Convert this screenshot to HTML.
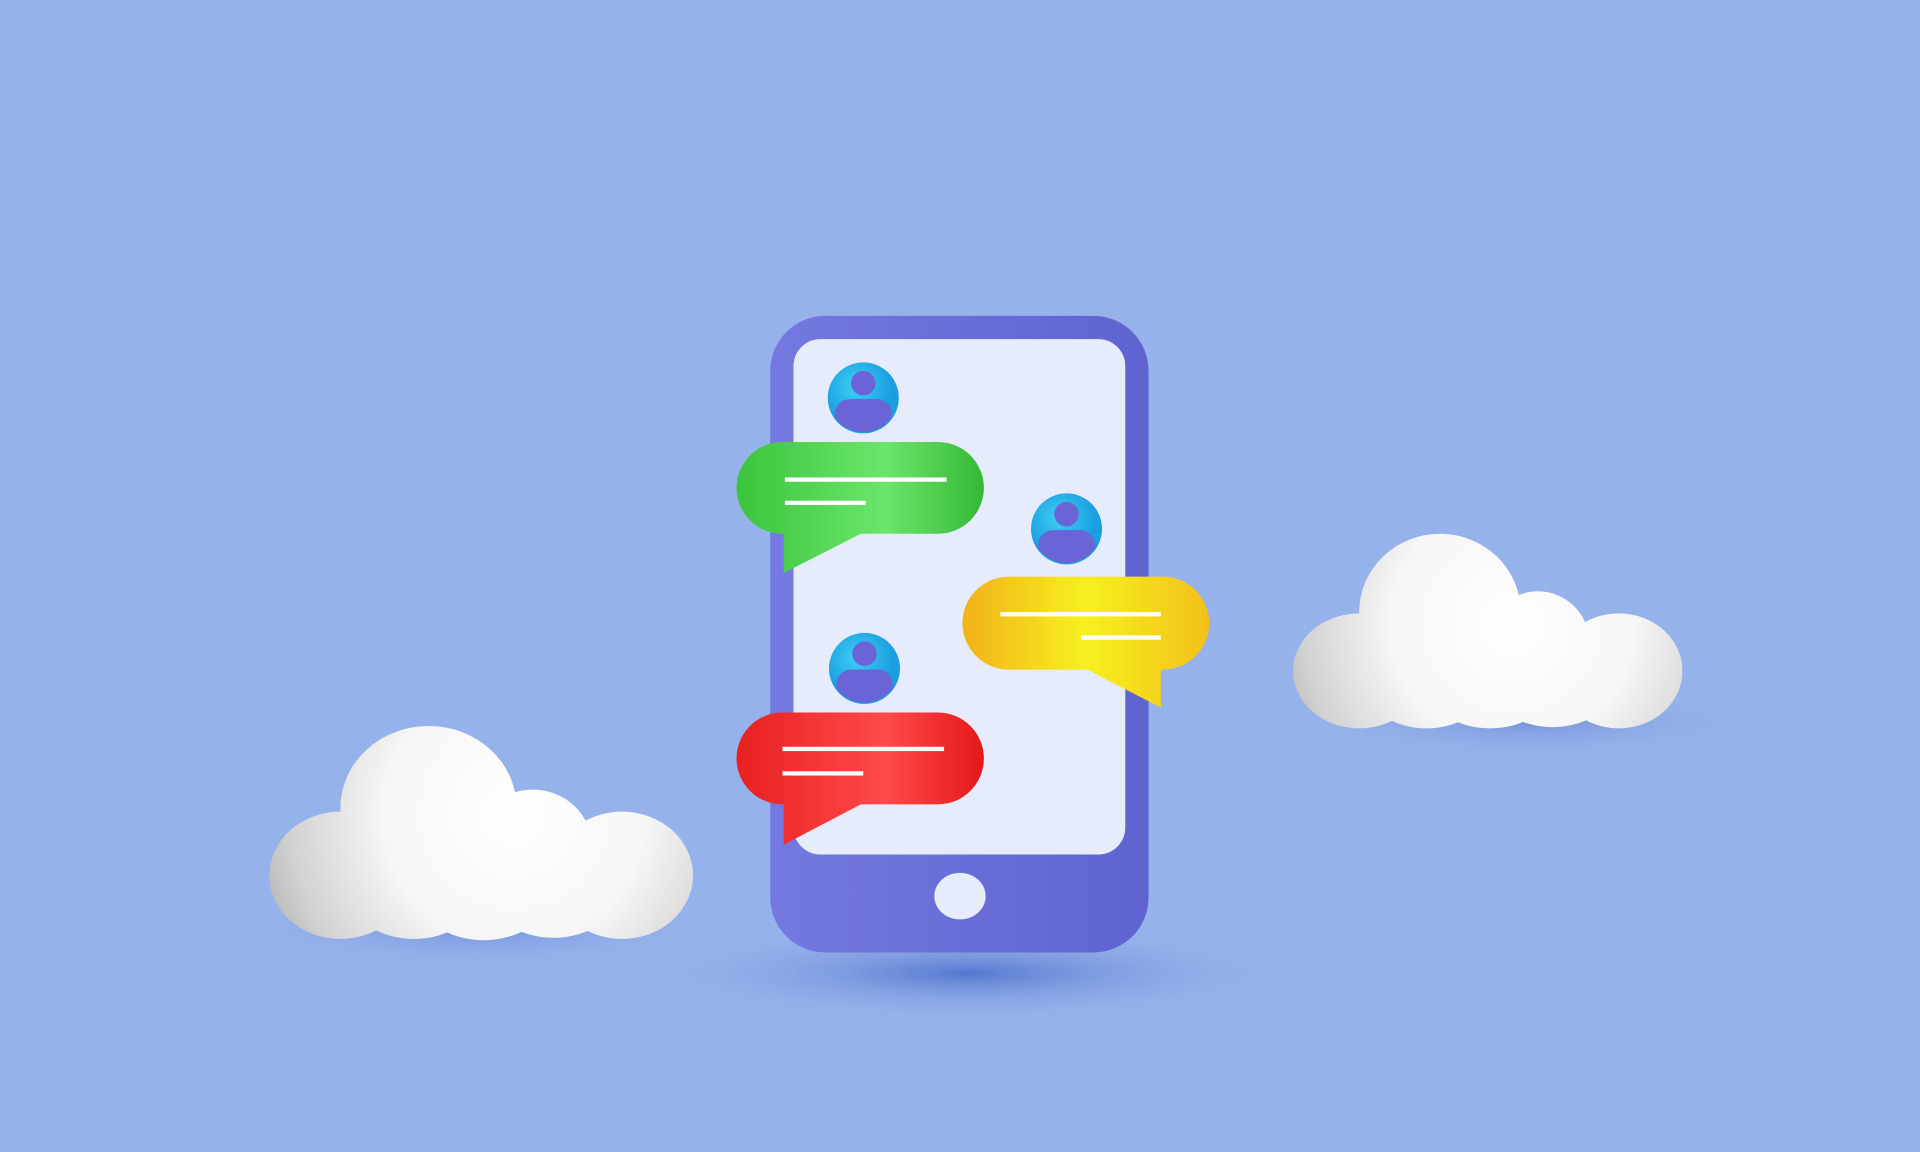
<!DOCTYPE html>
<html><head><style>html,body{margin:0;padding:0;background:#96b2ea;overflow:hidden}svg{display:block}</style></head>
<body>
<svg width="1920" height="1152" viewBox="0 0 1568 941" preserveAspectRatio="none" xmlns="http://www.w3.org/2000/svg">
<defs>
<linearGradient id="ph" x1="0" x2="1"><stop offset="0" stop-color="#7479e0"/><stop offset="1" stop-color="#5f63cf"/></linearGradient>
<radialGradient id="sh"><stop offset="0" stop-color="#3f63c8" stop-opacity=".75"/><stop offset="1" stop-color="#96b2ea" stop-opacity="0"/></radialGradient>
<radialGradient id="cl1" gradientUnits="userSpaceOnUse" cx="420" cy="665" r="215"><stop offset="0" stop-color="#ffffff"/><stop offset=".5" stop-color="#f6f6f6"/><stop offset=".85" stop-color="#d2d2d2"/><stop offset="1" stop-color="#b8b8b8"/></radialGradient>
<radialGradient id="cl2" gradientUnits="userSpaceOnUse" cx="1235" cy="510" r="200"><stop offset="0" stop-color="#ffffff"/><stop offset=".5" stop-color="#f6f6f6"/><stop offset=".85" stop-color="#d2d2d2"/><stop offset="1" stop-color="#b8b8b8"/></radialGradient>
<linearGradient id="gr" x1="0" x2="1"><stop offset="0" stop-color="#3cc43c"/><stop offset=".6" stop-color="#6ae66a"/><stop offset="1" stop-color="#36b836"/></linearGradient>
<linearGradient id="ye" x1="0" x2="1"><stop offset="0" stop-color="#f2b21a"/><stop offset=".5" stop-color="#f7f01e"/><stop offset="1" stop-color="#f3c01a"/></linearGradient>
<linearGradient id="re" x1="0" x2="1"><stop offset="0" stop-color="#e82020"/><stop offset=".6" stop-color="#ff4a4a"/><stop offset="1" stop-color="#e41818"/></linearGradient>
<radialGradient id="av" cx=".4" cy=".35"><stop offset="0" stop-color="#3fd0f5"/><stop offset="1" stop-color="#1a9ee0"/></radialGradient>
<clipPath id="ac"><circle cx="705" cy="325" r="28"/></clipPath>
</defs>
<rect width="1568" height="941" fill="#96b2ea"/>
<ellipse cx="790" cy="795" rx="270" ry="40" fill="url(#sh)"/>
<ellipse cx="390" cy="760" rx="200" ry="30" fill="url(#sh)" opacity=".5"/>
<ellipse cx="1250" cy="590" rx="190" ry="30" fill="url(#sh)" opacity=".5"/>
<rect x="629" y="258" width="309" height="520" rx="45" fill="url(#ph)"/>
<rect x="648" y="277" width="271" height="421" rx="22" fill="#e6ecfb"/>
<ellipse cx="784" cy="732" rx="21" ry="19" fill="#e6ecfb"/>
<g id="a1"><circle cx="705" cy="325" r="29" fill="url(#av)"/><circle cx="705" cy="313" r="10" fill="#6a64d6"/><g clip-path="url(#ac)"><path d="M682 360 v-22 a12 12 0 0 1 12 -12 h22 a12 12 0 0 1 12 12 v22z" fill="#6a64d6"/></g></g>
<use href="#a1" transform="translate(166,107)"/>
<use href="#a1" transform="translate(1,221)"/>
<path d="M638 361 H766 a37 37 0 0 1 0 75 H703 L640 468 V436 a37 37 0 0 1 -2 -75z" fill="url(#gr)"/>
<rect x="641" y="390" width="132" height="3.5" fill="#fff"/><rect x="641" y="409" width="66" height="3.5" fill="#fff"/>
<path d="M824 471 H951 a37 37 0 0 1 -3 76 V578 L888 547 H824 a38 38 0 0 1 0 -76z" fill="url(#ye)"/>
<rect x="817" y="500" width="131" height="3.5" fill="#fff"/><rect x="883" y="519" width="65" height="3.5" fill="#fff"/>
<path d="M638 582 H766 a37 37 0 0 1 0 75 H703 L640 690 V657 a37 37 0 0 1 -2 -75z" fill="url(#re)"/>
<rect x="639" y="610" width="132" height="3.5" fill="#fff"/><rect x="639" y="630" width="66" height="3.5" fill="#fff"/>
<g fill="url(#cl1)">
<ellipse cx="350" cy="660" rx="72" ry="67"/>
<ellipse cx="435" cy="690" rx="48" ry="45"/>
<ellipse cx="278" cy="715" rx="58" ry="52"/>
<ellipse cx="508" cy="715" rx="58" ry="52"/>
<ellipse cx="338" cy="725" rx="55" ry="42"/>
<ellipse cx="395" cy="728" rx="55" ry="40"/>
<ellipse cx="452" cy="726" rx="55" ry="40"/>
<rect x="280" y="680" width="230" height="50"/>
</g>
<g fill="url(#cl2)">
<ellipse cx="1176" cy="500" rx="66" ry="64"/>
<ellipse cx="1256" cy="525" rx="42" ry="42"/>
<ellipse cx="1110" cy="548" rx="54" ry="47"/>
<ellipse cx="1322" cy="548" rx="52" ry="47"/>
<ellipse cx="1165" cy="556" rx="52" ry="39"/>
<ellipse cx="1217" cy="558" rx="52" ry="37"/>
<ellipse cx="1268" cy="556" rx="52" ry="38"/>
<rect x="1110" y="515" width="212" height="45"/>
</g>
</svg>
</body></html>
